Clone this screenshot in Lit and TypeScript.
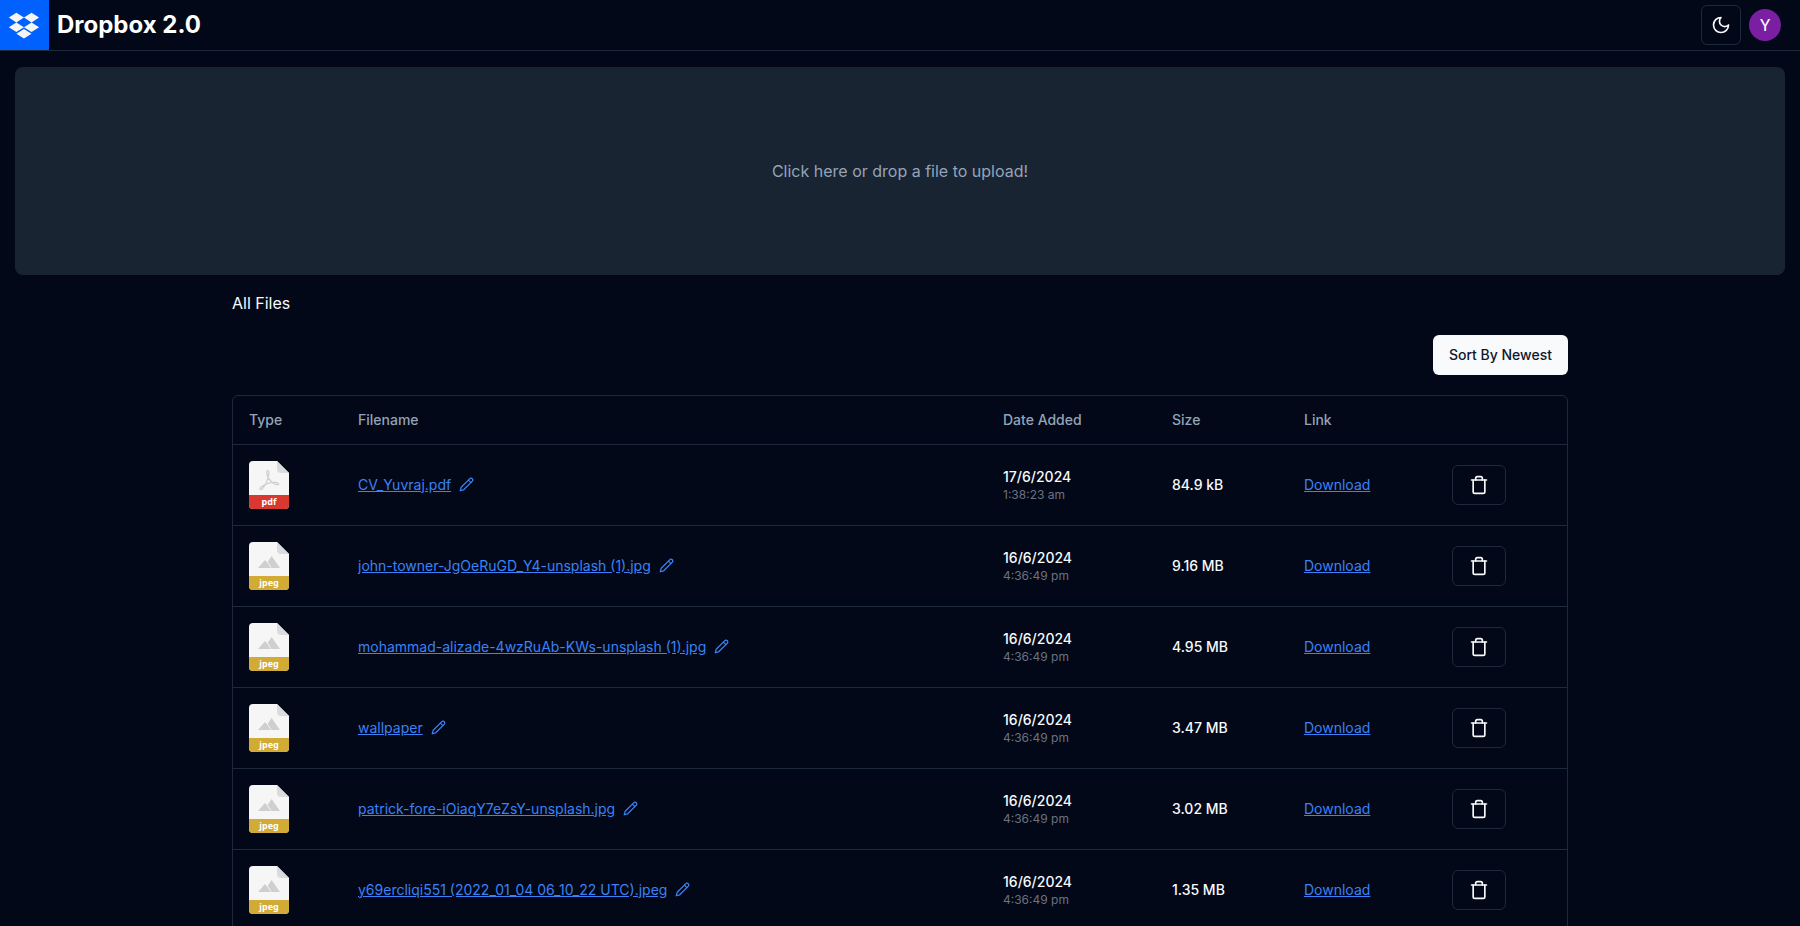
import { LitElement, html, css, svg } from "lit";
import { customElement, property, state } from "lit/decorators.js";

interface FileEntry {
  name: string;
  kind: "pdf" | "jpeg";
  date: string;
  time: string;
  size: string;
}

const FILES: FileEntry[] = [
  { name: "CV_Yuvraj.pdf", kind: "pdf", date: "17/6/2024", time: "1:38:23 am", size: "84.9 kB" },
  { name: "john-towner-JgOeRuGD_Y4-unsplash (1).jpg", kind: "jpeg", date: "16/6/2024", time: "4:36:49 pm", size: "9.16 MB" },
  { name: "mohammad-alizade-4wzRuAb-KWs-unsplash (1).jpg", kind: "jpeg", date: "16/6/2024", time: "4:36:49 pm", size: "4.95 MB" },
  { name: "wallpaper", kind: "jpeg", date: "16/6/2024", time: "4:36:49 pm", size: "3.47 MB" },
  { name: "patrick-fore-iOiaqY7eZsY-unsplash.jpg", kind: "jpeg", date: "16/6/2024", time: "4:36:49 pm", size: "3.02 MB" },
  { name: "y69ercliqi551 (2022_01_04 06_10_22 UTC).jpeg", kind: "jpeg", date: "16/6/2024", time: "4:36:49 pm", size: "1.35 MB" },
];

@customElement("file-icon")
export class FileIcon extends LitElement {
  static styles = css`
    :host {
      display: block;
      width: 40px;
      height: 48px;
    }
    svg {
      display: block;
    }
    .label {
      font: 700 9px "Noto Sans", sans-serif;
      fill: #fff;
      text-anchor: middle;
    }
  `;

  @property() kind: FileEntry["kind"] = "jpeg";

  render() {
    const color = this.kind === "pdf" ? "#d93831" : "#d1ab35";
    const glyph =
      this.kind === "pdf"
        ? svg`<path fill="none" stroke="#d0d0d0" stroke-width="1.3" stroke-linejoin="round" stroke-linecap="round"
            d="M18.500 9.600c1.500-.4 1.500 2.300 1 5.400-.8 4.400-4.100 12-7 13.300-2 .9-2.400-1 .2-2.800 3.700-2.500 9.600-4.300 13.600-4.100 2.700.1 3.700.8 3.300 1.700-.7 1.400-4.500.2-7.300-2.500-2.400-2.200-4-5.200-4.400-8-.2-1.700-.1-2.800.6-3z"/>`
        : svg`<path fill="#cfcfcf" d="M9 26l7-8 2.200 2.600 4.400-6.600L31 26z"/>
            <path fill="none" stroke="#f5f5f5" stroke-width="1" d="M18 19.600l4 6"/>`;
    return html`
      <svg width="40" height="48" viewBox="0 0 40 48" role="img" aria-label=${this.kind}>
        <path fill="#f6f6f6" d="M4 0h24l12 12v32a4 4 0 0 1-4 4H4a4 4 0 0 1-4-4V4a4 4 0 0 1 4-4z" />
        <path fill="#dbdbdb" d="M28 0l12 12h-8a4 4 0 0 1-4-4z" />
        ${glyph}
        <path fill=${color} d="M0 34h40v10a4 4 0 0 1-4 4H4a4 4 0 0 1-4-4z" />
        <text class="label" x="20" y="44">${this.kind}</text>
      </svg>
    `;
  }
}

@customElement("app-root")
export class AppRoot extends LitElement {
  static styles = css`
    :host {
      display: block;
      min-height: 100vh;
      background: #020817;
      color: #f8fafc;
      font: 400 16px/24px Inter, sans-serif;
    }
    * {
      box-sizing: border-box;
    }
    svg {
      display: block;
      flex: none;
    }
    button {
      font: inherit;
      color: inherit;
      cursor: pointer;
    }
    .icon {
      fill: none;
      stroke: currentColor;
      stroke-width: 2;
      stroke-linecap: round;
      stroke-linejoin: round;
    }
    header {
      display: flex;
      align-items: center;
      justify-content: space-between;
      border-bottom: 1px solid #1e293b;
      padding-right: 19px;
    }
    .brand {
      display: flex;
      align-items: center;
      gap: 8px;
      color: #fff;
      text-decoration: none;
    }
    h1 {
      margin: 0;
      font-size: 24px;
      line-height: 32px;
      font-weight: 700;
    }
    .actions {
      display: flex;
      align-items: center;
      gap: 8px;
    }
    .outline {
      display: flex;
      align-items: center;
      justify-content: center;
      height: 40px;
      padding: 0 16px;
      border: 1px solid #1e293b;
      border-radius: 6px;
      background: #020817;
    }
    .toggle {
      width: 40px;
      padding: 0;
    }
    .avatar {
      width: 32px;
      height: 32px;
      padding: 0;
      border: 0;
      border-radius: 50%;
      background: #7b1fa2;
      color: #fff;
      font: 400 17px/32px Roboto, sans-serif;
    }
    .dropzone {
      display: flex;
      align-items: center;
      justify-content: center;
      height: 208px;
      margin: 16px 15px;
      border-radius: 8px;
      background: #192433;
      color: #94a3b8;
      cursor: pointer;
    }
    .picker {
      display: none;
    }
    main {
      display: flex;
      flex-direction: column;
      gap: 20px;
      max-width: 1400px;
      margin: 0 auto;
      padding: 0 32px;
    }
    h2 {
      margin: 0;
      font-size: 16px;
      font-weight: 400;
    }
    .sort {
      align-self: flex-end;
      height: 40px;
      padding: 0 16px;
      border: 0;
      border-radius: 6px;
      background: #f8fafc;
      color: #0f172a;
      font-size: 14px;
      line-height: 20px;
      font-weight: 500;
    }
    .frame {
      border: 1px solid #1e293b;
      border-radius: 6px;
    }
    table {
      width: 100%;
      table-layout: fixed;
      border-collapse: collapse;
      font-size: 14px;
      line-height: 20px;
    }
    tbody tr {
      border-top: 1px solid #1e293b;
    }
    th {
      height: 48px;
      padding: 0 16px;
      text-align: left;
      font-weight: 500;
      color: #94a3b8;
    }
    td {
      padding: 16px;
      height: 81px;
    }
    .type {
      width: 109px;
    }
    .date {
      width: 169px;
    }
    .size {
      width: 132px;
    }
    .link {
      width: 148px;
    }
    .remove {
      width: 131px;
    }
    .strong {
      font-weight: 500;
    }
    .time {
      display: block;
      font-size: 12px;
      line-height: 16px;
      font-weight: 400;
      color: #6b7280;
    }
    .name {
      display: flex;
      align-items: center;
      gap: 8px;
      color: #3b82f6;
    }
    .rename {
      padding: 0;
      border: 0;
      background: none;
      text-align: left;
    }
    .underlined {
      text-decoration: underline;
    }
    .download {
      color: #3b82f6;
    }
  `;

  @state() private newestFirst = true;

  private toggleSort() {
    this.newestFirst = !this.newestFirst;
  }

  private renderRow(file: FileEntry) {
    return html`
      <tr>
        <td><file-icon .kind=${file.kind}></file-icon></td>
        <td>
          <button class="rename name" type="button">
            <span class="underlined">${file.name}</span>
            <svg class="icon" width="15" height="15" viewBox="0 0 24 24" aria-hidden="true">
              <path d="M17 3a2.850 2.830 0 1 1 4 4L7.500 20.500 2 22l1.500-5.500Z" />
              <path d="m15 5 4 4" />
            </svg>
          </button>
        </td>
        <td class="strong">${file.date}<span class="time">${file.time}</span></td>
        <td class="strong">${file.size}</td>
        <td><a class="download" href="#download">Download</a></td>
        <td>
          <button class="outline" type="button" aria-label="Delete">
            <svg class="icon" width="20" height="20" viewBox="0 0 24 24" aria-hidden="true">
              <path d="M3 6h18" />
              <path d="M19 6v14c0 1-1 2-2 2H7c-1 0-2-1-2-2V6" />
              <path d="M8 6V4c0-1 1-2 2-2h4c1 0 2 1 2 2v2" />
            </svg>
          </button>
        </td>
      </tr>
    `;
  }

  render() {
    const files = this.newestFirst ? FILES : [...FILES].reverse();
    return html`
      <header>
        <a class="brand" href="#home">
          <svg width="49" height="50" viewBox="0 0 49 50" aria-hidden="true">
            <path fill="#0061fe" d="M0 0h49v50H0z" />
            <path
              fill="#f7f5f2"
              transform="translate(8.8 10.5) scale(1.263)"
              d="M6 1.807L0 5.629l6 3.822 6.001-3.822zM18 1.807l-6 3.822 6 3.822 6-3.822zM0 13.274l6 3.822 6.001-3.822L6 9.452zM18 9.452l-6 3.822 6 3.822 6-3.822zM6 18.371l6.001 3.822 6-3.822-6-3.822z"
            />
          </svg>
          <h1>Dropbox 2.0</h1>
        </a>
        <div class="actions">
          <button class="outline toggle" type="button" aria-label="Toggle theme">
            <svg class="icon" width="20" height="20" viewBox="0 0 24 24" aria-hidden="true">
              <path d="M12 3a6 6 0 0 0 9 9 9 9 0 1 1-9-9Z" />
            </svg>
          </button>
          <button class="avatar" type="button">Y</button>
        </div>
      </header>

      <label class="dropzone">
        <input class="picker" type="file" />
        Click here or drop a file to upload!
      </label>

      <main>
        <h2>All Files</h2>
        <button class="sort" type="button" @click=${this.toggleSort}>
          Sort By ${this.newestFirst ? "Newest" : "Oldest"}
        </button>
        <div class="frame">
          <table>
            <thead>
              <tr>
                <th class="type">Type</th>
                <th>Filename</th>
                <th class="date">Date Added</th>
                <th class="size">Size</th>
                <th class="link">Link</th>
                <th class="remove"></th>
              </tr>
            </thead>
            <tbody>
              ${files.map((file) => this.renderRow(file))}
            </tbody>
          </table>
        </div>
      </main>
    `;
  }
}
